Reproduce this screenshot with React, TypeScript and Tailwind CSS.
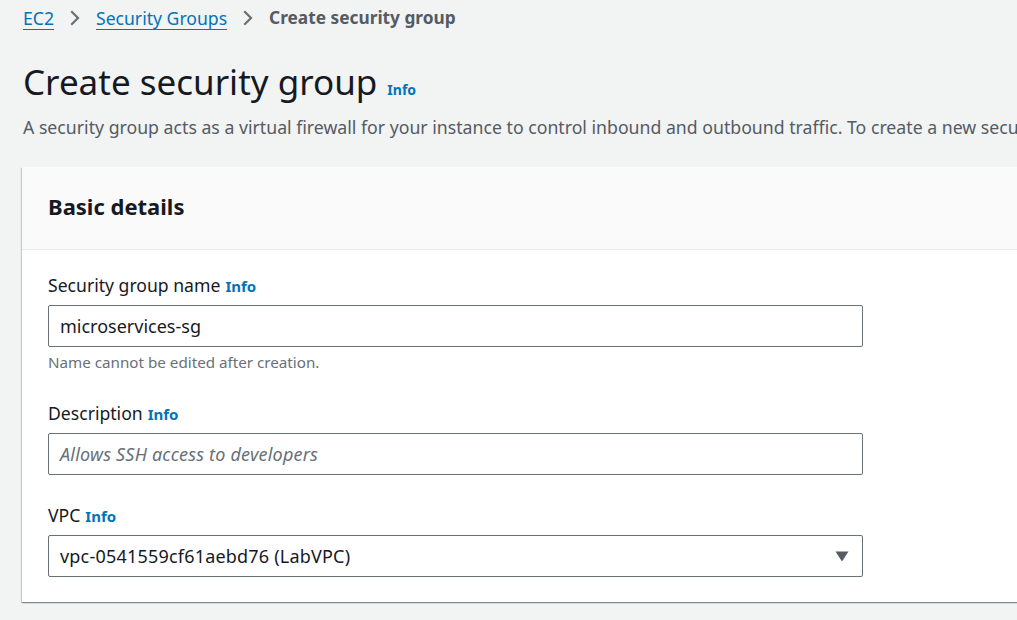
import React from "react";

function Chevron() {
  return (
    <svg width="14" height="16" viewBox="0 0 14 16" className="mx-[14px]">
      <path d="M4 2 L10 8 L4 14" fill="none" stroke="#687078" strokeWidth="2.2" strokeLinecap="square" />
    </svg>
  );
}

function Info() {
  return <span className="text-[#0073bb] font-bold text-[15px] ml-[5px]">Info</span>;
}

export default function App() {
  return (
    <div className="w-[1017px] h-[620px] overflow-hidden bg-[#f2f3f3] font-['Noto_Sans',sans-serif] text-[#16191f] pl-[22px]">
      <nav className="flex items-center h-[22px] mt-[7px] text-[17.6px] leading-[22px]">
        <span className="ml-[1px] text-[#0073bb] underline underline-offset-[4px] decoration-1">EC2</span>
        <Chevron />
        <span className="text-[#0073bb] underline underline-offset-[4px] decoration-1">Security Groups</span>
        <Chevron />
        <span className="text-[#545b64] font-bold text-[17.3px]">Create security group</span>
      </nav>
      <div className="mt-[31px] flex items-baseline h-[44px]">
        <h1 className="text-[35px] leading-[44px] font-normal ml-[1px]">Create security group</h1>
        <span className="text-[#0073bb] font-bold text-[14px] ml-[10px]">Info</span>
      </div>
      <p className="mt-[12px] text-[17.7px] leading-[22px] text-[#545b64] whitespace-nowrap ml-[1px]">
        A security group acts as a virtual firewall for your instance to control inbound and outbound traffic. To create a new security group, complete the fields below.
      </p>
      <div className="mt-[29px] w-[1100px] bg-white shadow-[0_1px_1px_0_rgba(0,28,36,0.3),1px_1px_1px_0_rgba(0,28,36,0.15),-1px_1px_1px_0_rgba(0,28,36,0.15)]">
        <div className="h-[83px] bg-[#fafafa] border-b border-[#eaeded] flex items-center px-[26px]">
          <h2 className="text-[22px] font-bold leading-[28px] -mt-[4px]">Basic details</h2>
        </div>
        <div className="px-[26px] pt-[24px] pb-[25px]">
          <label className="block text-[17.6px] leading-[22px]">
            Security group name<Info />
          </label>
          <div className="mt-[8px] w-[815px] h-[42px] border border-[#687078] rounded-[2px] flex items-center px-[11px] text-[18px]">
            microservices-sg
          </div>
          <p className="mt-[5px] text-[15.2px] leading-[20px] text-[#687078]">Name cannot be edited after creation.</p>
          <label className="block mt-[30px] text-[17.6px] leading-[22px]">
            Description<Info />
          </label>
          <div className="mt-[8px] w-[815px] h-[42px] border border-[#687078] rounded-[2px] flex items-center px-[11px] text-[18px] italic text-[#687078] tracking-[0.2px]">
            Allows SSH access to developers
          </div>
          <label className="block mt-[29px] text-[17.6px] leading-[22px]">
            VPC<Info />
          </label>
          <div className="mt-[8px] w-[815px] h-[42px] border border-[#687078] rounded-[2px] flex items-center justify-between pl-[11px] pr-[13px] text-[18px]">
            <span className="tracking-[0.2px]">vpc-0541559cf61aebd76 (LabVPC)</span>
            <svg width="14" height="11" viewBox="0 0 14 11">
              <path d="M0.5 0.5 L13.5 0.5 L7 10.5 Z" fill="#545b64" />
            </svg>
          </div>
        </div>
      </div>
    </div>
  );
}
